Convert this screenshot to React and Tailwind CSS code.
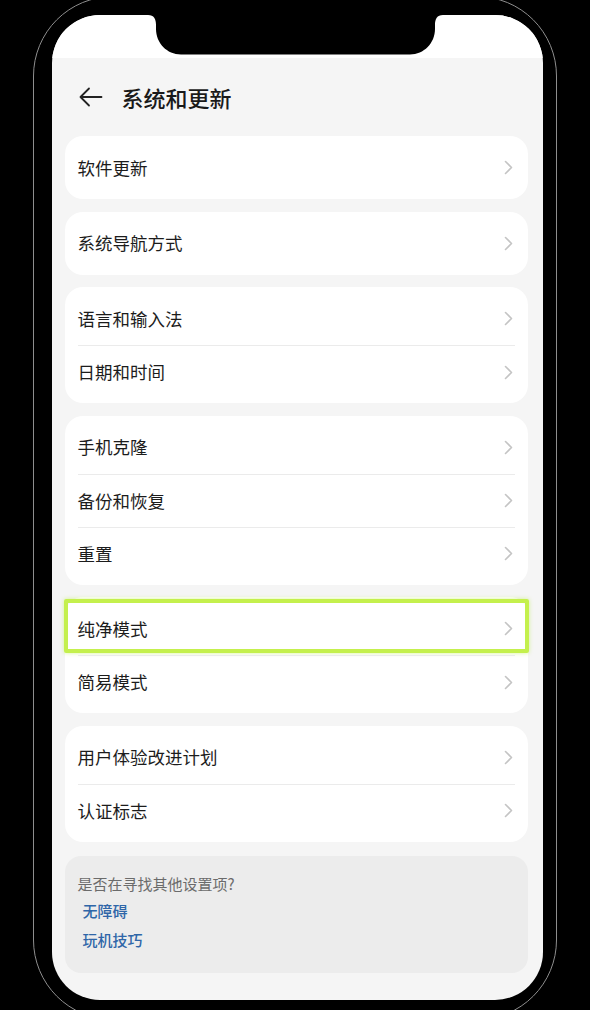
import React from "react";

const FONT = { fontFamily: '"Noto Sans CJK SC", "Noto Sans", sans-serif' };

function Chevron() {
  return (
    <svg width="9" height="15" viewBox="0 0 9 15" fill="none">
      <polyline points="1.5,1.5 7.5,7.5 1.5,13.5" stroke="#c4c4c4" strokeWidth="1.6" strokeLinecap="round" strokeLinejoin="round" />
    </svg>
  );
}

function Row({ label, first, highlight }) {
  return (
    <div
      className={
        "relative mx-[13px] h-[53px] flex items-center justify-between pr-[2px] " +
        (first ? "" : "border-t border-[#ebebeb]")
      }
    >
      <span className="text-[17.5px] leading-none text-[#1c1c1c]">{label}</span>
      <Chevron />
      {highlight && (
        <div className="absolute -left-[14px] -right-[14px] -top-[3.5px] bottom-[2.5px] border-[4px] border-[#c4f04d] rounded-[2px] shadow-[0_0_4px_rgba(190,240,80,0.6)]" />
      )}
    </div>
  );
}

function Card({ items, highlightIndex }) {
  return (
    <div className="rounded-[18px] bg-white py-[5px]">
      {items.map((it, i) => (
        <Row key={it} label={it} first={i === 0} highlight={i === highlightIndex} />
      ))}
    </div>
  );
}

export default function App() {
  return (
    <div className="h-[1010px] w-[590px] overflow-hidden bg-black" style={FONT}>
      <div className="ml-[33px] mr-[33px] mt-[-4px] h-[1024px] rounded-[80px] border-[1.5px] border-[#8e8e8e] pl-[17.5px] pr-[13.5px] pt-[17.5px]">
        <div className="h-[985px] rounded-[48px] overflow-hidden bg-[#f5f5f5] flex flex-col">
          {/* status bar with notch */}
          <div className="h-[43.5px] bg-white flex justify-center shrink-0">
            <svg width="295" height="40" viewBox="0 0 295 40" className="mr-[4px]">
              <path
                d="M0,0 H295 C289,0 287,4 287,10 V14 C287,28 276,39.5 262,39.5 H33 C19,39.5 8,28 8,14 V10 C8,4 6,0 0,0 Z"
                fill="#000"
              />
            </svg>
          </div>
          {/* header */}
          <div className="h-[78px] shrink-0 flex items-center pl-[27px]">
            <svg width="24" height="20" viewBox="0 0 24 20" fill="none">
              <path d="M22.5 10 H1.5 M10 1.5 L1.5 10 L10 18.5" stroke="#222" strokeWidth="1.8" strokeLinecap="round" strokeLinejoin="round" />
            </svg>
            <span className="ml-[19px] text-[22px] leading-none text-[#1a1a1a] font-medium">系统和更新</span>
          </div>
          {/* cards */}
          <div className="flex flex-col gap-[12.5px] pl-[13px] pr-[15px]">
            <Card items={["软件更新"]} />
            <Card items={["系统导航方式"]} />
            <Card items={["语言和输入法", "日期和时间"]} />
            <Card items={["手机克隆", "备份和恢复", "重置"]} />
            <Card items={["纯净模式", "简易模式"]} highlightIndex={0} />
            <Card items={["用户体验改进计划", "认证标志"]} />
            <div className="mt-[1.5px] rounded-[16px] bg-[#ececec] pt-[19.5px] pb-[22px] pl-[13px]">
              <div className="text-[15px] leading-[18px] text-[#6b6b6b]">是否在寻找其他设置项?</div>
              <div className="mt-[7px] pl-[5px] text-[15px] leading-[22px] text-[#2f66a8] font-medium">无障碍</div>
              <div className="mt-[7px] pl-[5px] text-[15px] leading-[22px] text-[#2f66a8] font-medium">玩机技巧</div>
            </div>
          </div>
        </div>
      </div>
    </div>
  );
}
